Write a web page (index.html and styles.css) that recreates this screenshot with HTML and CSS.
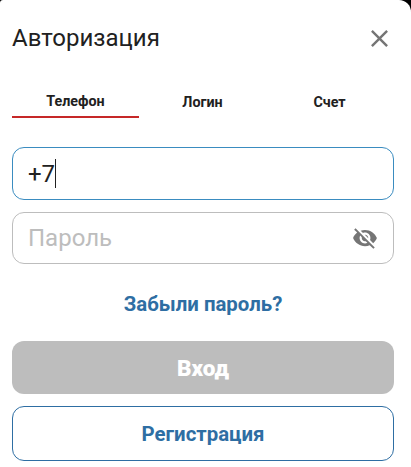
FILE: index.html
```html
<!DOCTYPE html>
<html lang="ru">
<head>
<meta charset="utf-8">
<title>Авторизация</title>
<link rel="stylesheet" href="styles.css">
</head>
<body>
<main class="modal">
  <header class="head">
    <h1 class="title">Авторизация</h1>
    <button class="close" aria-label="Закрыть">
      <svg class="close-icon" viewBox="0 0 24 24"><path d="M19 6.41 17.59 5 12 10.59 6.41 5 5 6.41 10.59 12 5 17.59 6.41 19 12 13.41 17.59 19 19 17.59 13.41 12z"/></svg>
    </button>
  </header>
  <nav class="tabs">
    <div class="tab tab-active">Телефон</div>
    <div class="tab">Логин</div>
    <div class="tab">Счет</div>
  </nav>
  <div class="field field-focus"><span class="value">+7</span><span class="caret"></span></div>
  <div class="field"><span class="placeholder">Пароль</span>
    <svg class="eye" viewBox="0 0 24 24"><path d="M12 7c2.76 0 5 2.24 5 5 0 .65-.13 1.26-.36 1.83l2.92 2.92c1.51-1.26 2.7-2.89 3.43-4.75-1.73-4.39-6-7.5-11-7.5-1.4 0-2.74.25-3.98.7l2.16 2.16C10.74 7.13 11.35 7 12 7zM2 4.27l2.28 2.28.46.46C3.08 8.3 1.78 10.02 1 12c1.73 4.39 6 7.5 11 7.5 1.55 0 3.03-.3 4.38-.84l.42.42L19.73 22 21 20.73 3.27 3 2 4.27zM7.53 9.8l1.55 1.55c-.05.21-.08.43-.08.65 0 1.66 1.34 3 3 3 .22 0 .44-.03.65-.08l1.55 1.55c-.67.33-1.41.53-2.2.53-2.76 0-5-2.24-5-5 0-.79.2-1.53.53-2.2zm4.31-.78 3.15 3.15.02-.16c0-1.66-1.34-3-3-3l-.17.01z"/></svg>
  </div>
  <a class="forgot">Забыли пароль?</a>
  <button class="btn btn-login">Вход</button>
  <button class="btn btn-register">Регистрация</button>
</main>
</body>
</html>
```
FILE: styles.css
```css
* { box-sizing: border-box; }
html, body { margin: 0; height: 100%; background: #000; }
body { font-family: Roboto, sans-serif; overflow: hidden; }
.modal {
  width: 411px;
  height: 467px;
  background: #fff;
  border-radius: 3px 12px 0 0;
  padding: 20px 17px 0 12px;
  display: flex;
  flex-direction: column;
}
.head { display: flex; justify-content: space-between; align-items: center; height: 36px; }
.title { margin: 0; font-size: 24px; font-weight: 400; color: #212121; line-height: 36px; }
.close { border: 0; background: none; padding: 0; width: 29px; height: 29px; margin-top: 1px; margin-right: 0; }
.close-icon { display: block; width: 29px; height: 29px; fill: #757575; }
.tabs { display: flex; margin-top: 29px; width: 381px; height: 33px; margin-bottom: 29px; }
.tab { flex: 1; text-align: center; font-size: 14.3px; font-weight: 700; color: #212121; line-height: 16px; padding-top: 9px; }
.tab-active { padding-top: 8px; border-bottom: 2px solid #c62828; }
.field {
  width: 382px; height: 52px; border: 1px solid #bdbdbd; border-radius: 12px;
  display: flex; align-items: center; padding: 0 15px; margin-bottom: 13px;
  font-size: 24px; position: relative;
}
.field-focus { height: 53px; margin-bottom: 12px; border-color: #3a8cc0; }
.value { color: #212121; }
.caret { width: 1px; height: 29px; background: #212121; }
.placeholder { color: #bdbdbd; }
.eye { width: 26px; height: 26px; fill: #757575; margin-left: auto; margin-right: 0; }
.forgot { margin-top: 15px; width: 382px; text-align: center; font-size: 20.4px; font-weight: 700; color: #2e6ea3; line-height: 24px; }
.btn { display: block; width: 382px; font-family: inherit; font-weight: 700; font-size: 20.4px; padding: 0; }
.btn-login { margin-top: 25px; height: 53px; border: 0; border-radius: 12px; background: #bdbdbd; color: #fff; font-size: 22.5px; font-weight: 900; }
.btn-register { margin-top: 12px; height: 55px; border: 1px solid #2e6ea3; border-radius: 12px; background: #fff; color: #2e6ea3; }
```
